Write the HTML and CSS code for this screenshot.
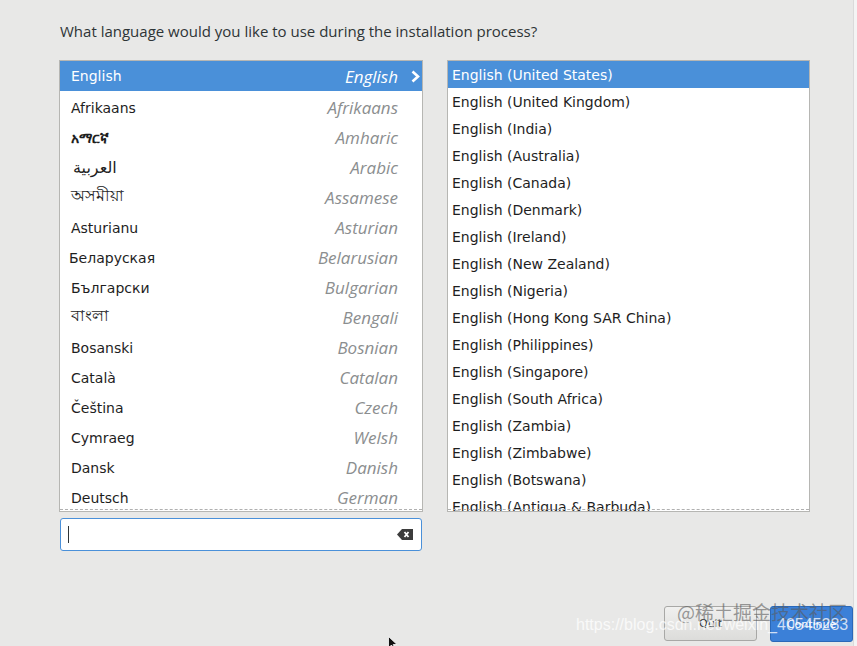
FILE: index.html
```html
<!DOCTYPE html>
<html>
<head>
<meta charset="utf-8">
<link rel="stylesheet" href="styles.css">
</head>
<body>
<div class="page">
  <p class="question">What language would you like to use during the installation process?</p>
  <div class="panes">
    <div class="left">
      <div class="list lang-list">
        <div class="lrow selected"><span class="native">English</span><span class="eng">English</span><span class="chev"><svg width="9" height="13" viewBox="0 0 9 13"><path d="M1.5 1.5 L7 6.5 L1.5 11.5" fill="none" stroke="#fff" stroke-width="2.6"/></svg></span></div>
        <div class="lrow"><span class="native">Afrikaans</span><span class="eng">Afrikaans</span></div>
        <div class="lrow"><span class="native bold">አማርኛ</span><span class="eng">Amharic</span></div>
        <div class="lrow"><span class="native arab">العربية</span><span class="eng">Arabic</span></div>
        <div class="lrow"><span class="native indic">অসমীয়া</span><span class="eng">Assamese</span></div>
        <div class="lrow"><span class="native">Asturianu</span><span class="eng">Asturian</span></div>
        <div class="lrow"><span class="native shift">Беларуская</span><span class="eng">Belarusian</span></div>
        <div class="lrow"><span class="native">Български</span><span class="eng">Bulgarian</span></div>
        <div class="lrow"><span class="native indic">বাংলা</span><span class="eng">Bengali</span></div>
        <div class="lrow"><span class="native">Bosanski</span><span class="eng">Bosnian</span></div>
        <div class="lrow"><span class="native">Català</span><span class="eng">Catalan</span></div>
        <div class="lrow"><span class="native">Čeština</span><span class="eng">Czech</span></div>
        <div class="lrow"><span class="native">Cymraeg</span><span class="eng">Welsh</span></div>
        <div class="lrow"><span class="native">Dansk</span><span class="eng">Danish</span></div>
        <div class="lrow"><span class="native">Deutsch</span><span class="eng">German</span></div>
        <div class="undershoot"></div>
      </div>
      <div class="entry">
        <span class="cursor"></span>
        <svg class="clear" width="16" height="11" viewBox="0 0 16 11"><path d="M5 0 H16 V11 H5 L0 5.5 Z" fill="#3c3c3c"/><path d="M7.5 3 L11.5 8 M11.5 3 L7.5 8" stroke="#fff" stroke-width="1.8"/></svg>
      </div>
    </div>
    <div class="list locale-list">
      <div class="rrow selected">English (United States)</div>
      <div class="rrow">English (United Kingdom)</div>
      <div class="rrow">English (India)</div>
      <div class="rrow">English (Australia)</div>
      <div class="rrow">English (Canada)</div>
      <div class="rrow">English (Denmark)</div>
      <div class="rrow">English (Ireland)</div>
      <div class="rrow">English (New Zealand)</div>
      <div class="rrow">English (Nigeria)</div>
      <div class="rrow">English (Hong Kong SAR China)</div>
      <div class="rrow">English (Philippines)</div>
      <div class="rrow">English (Singapore)</div>
      <div class="rrow">English (South Africa)</div>
      <div class="rrow">English (Zambia)</div>
      <div class="rrow">English (Zimbabwe)</div>
      <div class="rrow">English (Botswana)</div>
      <div class="rrow">English (Antigua &amp; Barbuda)</div>
      <div class="undershoot"></div>
    </div>
  </div>
  <div class="footer">
    <button class="btn quit">Quit</button>
    <button class="btn continue">Continue</button>
  </div>
  <div class="edge"></div>
  <svg class="pointer" width="10" height="14" viewBox="0 0 10 14"><path d="M0.5 0.5 L0.5 12 L3.5 9 L6 13.5 L7.5 12.8 L5.2 8.5 L9 8.5 Z" fill="#111" stroke="#fff" stroke-width="0.8"/></svg>
  <div class="watermark">
    <span class="wm1">@稀土掘金技术社区</span>
    <span class="wm2">https://blog.csdn.net/weixin_40545283</span>
  </div>
</div>
</body>
</html>
```
FILE: styles.css
```css
html, body {
  margin: 0;
  padding: 0;
}
body {
  background: #e8e8e7;
  font-family: "DejaVu Sans", "Noto Sans", sans-serif;
  color: #2e3436;
}
.page {
  position: relative;
  width: 857px;
  height: 646px;
  overflow: hidden;
  display: flex;
  flex-direction: column;
}
.question {
  margin: 22px 0 0 60px;
  font-family: "Open Sans", "DejaVu Sans", sans-serif;
  font-size: 15px;
  line-height: 18px;
  color: #2e3436;
}
.panes {
  display: flex;
  gap: 24px;
  margin: 20px 0 0 59px;
}
.left {
  display: flex;
  flex-direction: column;
  width: 364px;
}
.list {
  position: relative;
  box-sizing: border-box;
  height: 452px;
  background: #fff;
  border: 1px solid #b6b6b3;
  overflow: hidden;
}
.lang-list {
  width: 364px;
}
.locale-list {
  width: 363px;
}
.lrow {
  box-sizing: border-box;
  display: flex;
  align-items: center;
  height: 30px;
  padding: 3px 24px 0 11px;
  font-size: 14px;
  color: #1e1e1e;
  position: relative;
}
.lrow .native {
  flex: 1;
}
.lrow .native.bold {
  font-weight: bold;
  font-family: "Noto Sans", "DejaVu Sans", sans-serif;
}
.lrow .native.arab {
  padding-left: 2px;
  font-size: 16px;
}
.lrow .native.indic {
  font-size: 16px;
  margin-top: -2px;
}
.lrow .native.shift {
  margin-left: -2px;
}
.lrow .eng {
  font-family: "Open Sans", "DejaVu Sans", sans-serif;
  font-style: italic;
  font-size: 17px;
  color: #8b8e8f;
}
.lrow.selected {
  background: #4a90d9;
  color: #fff;
  padding-top: 0;
}
.lrow.selected .eng {
  color: #fff;
}
.chev {
  position: absolute;
  right: 2px;
  top: 9px;
  height: 13px;
}
.rrow {
  box-sizing: border-box;
  height: 27px;
  line-height: 27px;
  padding: 1px 0 0 4px;
  font-size: 14px;
  color: #1e1e1e;
  white-space: nowrap;
}
.rrow.selected {
  background: #4a90d9;
  color: #fff;
}
.undershoot {
  position: absolute;
  left: 0;
  right: 0;
  bottom: 1px;
  border-bottom: 1px dashed #b0b0b0;
}
.entry {
  box-sizing: border-box;
  margin: 6px 0 0 1px;
  width: 362px;
  height: 33px;
  background: #fff;
  border: 1px solid #4a90d9;
  border-radius: 3px;
  display: flex;
  align-items: center;
  justify-content: space-between;
  padding: 0 8px 0 7px;
}
.cursor {
  width: 1px;
  height: 17px;
  background: #2e3436;
}
.footer {
  display: flex;
  justify-content: flex-end;
  gap: 13px;
  margin-top: 55px;
  padding-right: 4px;
}
.btn {
  box-sizing: border-box;
  height: 35px;
  border-radius: 3px;
  font-family: "DejaVu Sans", sans-serif;
  font-size: 11px;
}
.quit {
  width: 93px;
  background: linear-gradient(#f0f0ef, #dcdcda);
  border: 1px solid #a8a8a6;
  color: #2e3436;
}
.continue {
  width: 83px;
  height: 36px;
  background: #3b80d8;
  border: 1px solid #2a68b8;
  color: #fff;
}
.edge {
  position: absolute;
  right: 0;
  top: 0;
  width: 3px;
  height: 646px;
  background: #f4f4f4;
  border-left: 1px solid #dadada;
}
.pointer {
  position: absolute;
  left: 388px;
  top: 636px;
}
.watermark {
  position: absolute;
  left: 0;
  top: 0;
  width: 857px;
  height: 646px;
  pointer-events: none;
}
.wm1 {
  position: absolute;
  left: 677px;
  top: 600px;
  font-family: "Noto Sans CJK SC", sans-serif;
  font-size: 19px;
  line-height: 24px;
  color: rgba(90, 90, 90, 0.6);
  white-space: nowrap;
}
.wm2 {
  position: absolute;
  left: 576px;
  top: 616px;
  font-family: "Liberation Sans", sans-serif;
  font-size: 16px;
  color: rgba(255, 255, 255, 0.75);
  white-space: nowrap;
}
```
